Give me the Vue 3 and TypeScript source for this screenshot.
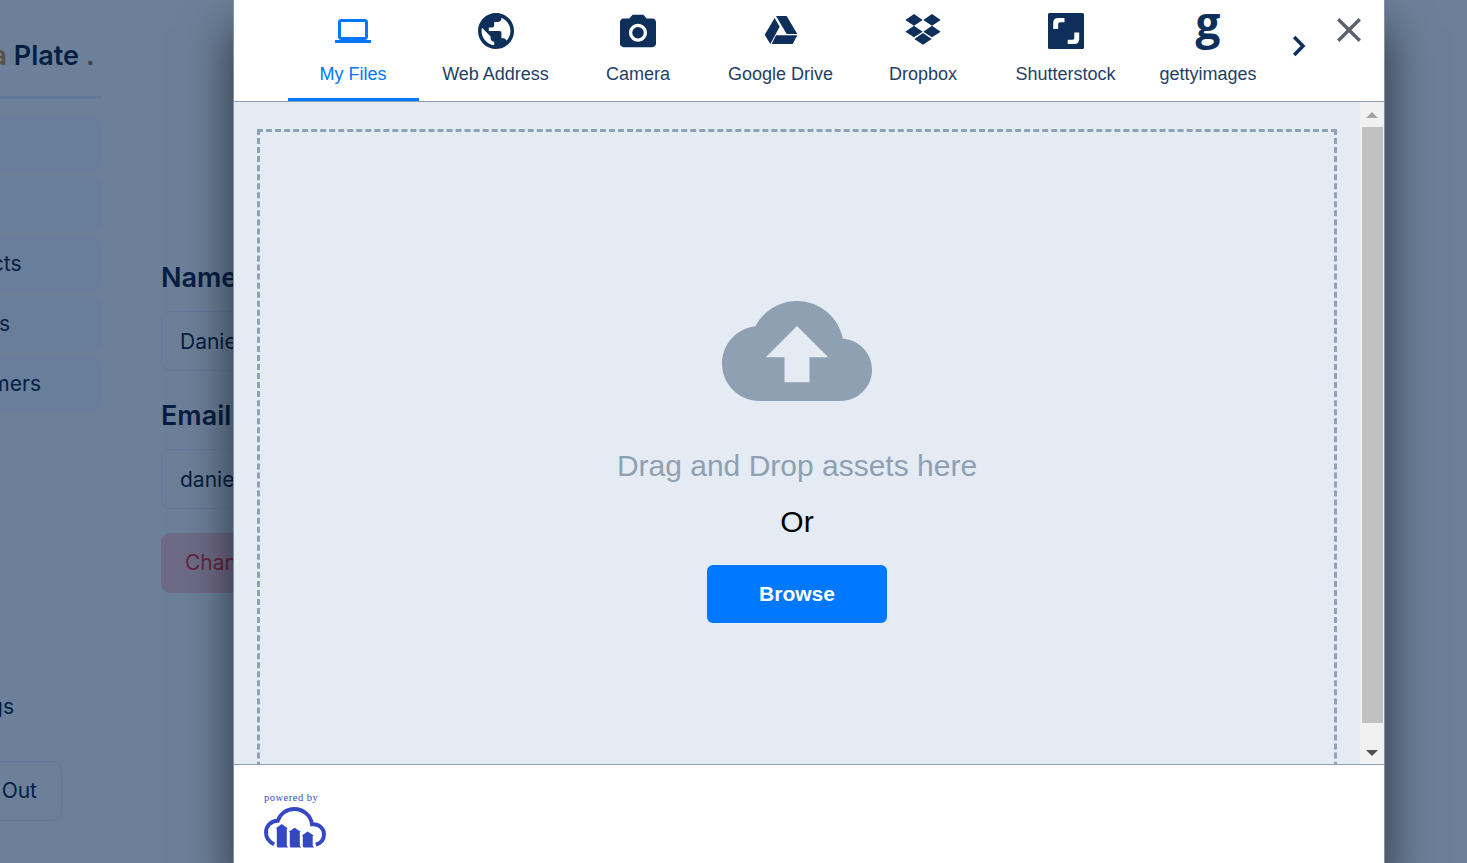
<script setup lang="ts">
interface MenuEntry {
  label: string
  size: string
}

interface Source {
  id: string
  label: string
}

const menu: MenuEntry[] = [
  { label: '', size: 'none' },
  { label: '', size: 'none' },
  { label: 'cts', size: 'medium' },
  { label: 's', size: 'short' },
  { label: 'mers', size: 'long' },
]

const sources: Source[] = [
  { id: 'files', label: 'My Files' },
  { id: 'web', label: 'Web Address' },
  { id: 'camera', label: 'Camera' },
  { id: 'drive', label: 'Google Drive' },
  { id: 'dropbox', label: 'Dropbox' },
  { id: 'shutterstock', label: 'Shutterstock' },
  { id: 'getty', label: 'gettyimages' },
]

const active = 'files'
</script>

<template>
  <div class="screen">
    <div class="page">
      <aside class="sidebar">
        <div class="brand"><span class="accent">a</span>&nbsp;Plate&nbsp;<span class="dot">.</span></div>
        <nav class="menu">
          <div v-for="(entry, i) in menu" :key="i" class="entry">
            <span class="entry-label" :class="entry.size">{{ entry.label }}</span>
          </div>
        </nav>
        <div class="settings">gs</div>
        <div class="logout">Out</div>
      </aside>
      <main class="profile">
        <h2>Name</h2>
        <div class="field">Daniel</div>
        <h2>Email</h2>
        <div class="field">daniel</div>
        <div class="change">Change</div>
      </main>
    </div>

    <section class="modal">
      <header class="top">
        <div class="tabs">
          <div v-for="s in sources" :key="s.id" class="tab" :class="{ active: s.id === active }">
            <svg v-if="s.id === 'files'" class="icon" viewBox="0 0 24 24">
              <path d="M20 18c1.1 0 2-.9 2-2V6c0-1.1-.9-2-2-2H4c-1.1 0-2 .9-2 2v10c0 1.1.9 2 2 2H0v2h24v-2h-4zM4 6h16v10H4V6z" />
            </svg>
            <svg v-else-if="s.id === 'web'" class="icon" viewBox="2 2 20 20">
              <path d="M12 2C6.48 2 2 6.48 2 12s4.48 10 10 10 10-4.48 10-10S17.52 2 12 2zm-1 17.93c-3.95-.49-7-3.85-7-7.93 0-.62.08-1.21.21-1.79L9 15v1c0 1.1.9 2 2 2v1.93zm6.9-2.54c-.26-.81-1-1.39-1.9-1.39h-1v-3c0-.55-.45-1-1-1H8v-2h2c.55 0 1-.45 1-1V7h2c1.1 0 2-.9 2-2v-.41c2.93 1.19 5 4.06 5 7.41 0 2.08-.8 3.97-2.1 5.39z" />
            </svg>
            <svg v-else-if="s.id === 'camera'" class="icon" viewBox="2 1 20 20">
              <circle cx="12" cy="12" r="3.2" />
              <path d="M9 2 7.17 4H4c-1.1 0-2 .9-2 2v12c0 1.1.9 2 2 2h16c1.1 0 2-.9 2-2V6c0-1.1-.9-2-2-2h-3.170L15 2H9zm3 15c-2.760 0-5-2.240-5-5s2.240-5 5-5 5 2.240 5 5-2.240 5-5 5z" />
            </svg>
            <svg v-else-if="s.id === 'drive'" class="icon" viewBox="578 39 108 108">
              <path d="M613 54 628 80 600 132 583 104ZM617 48H649L681 102H649ZM617 106H681L667 132H604Z" />
            </svg>
            <svg v-else-if="s.id === 'dropbox'" class="icon" viewBox="134 39 108 108">
              <path d="M161 42 187 60 161 77 135 60ZM215 42 241 60 215 77 189 60ZM161 77 187 95 161 112 135 95ZM215 77 241 95 215 112 189 95ZM188 99 214 117 188 134 162 117Z" />
            </svg>
            <svg v-else-if="s.id === 'shutterstock'" class="icon" viewBox="0 0 36 36">
              <path fill-rule="evenodd" d="M1.500 0H34.500Q36 0 36 1.500V34.500Q36 36 34.500 36H1.500Q0 36 0 34.500V1.500Q0 0 1.500 0ZM5.200 16V10Q5.200 5 10 5H16.500V9.300H12Q10.200 9.300 10.200 11V16ZM31.200 19.600V26Q31.200 31 26.500 31H19.700V26.700H24.500Q26.300 26.700 26.300 25V19.600Z" />
            </svg>
            <svg v-else class="icon" viewBox="0 0 36 36">
              <text class="letter-mark" x="18" y="26" text-anchor="middle">g</text>
            </svg>
            <span class="tab-label">{{ s.label }}</span>
          </div>
        </div>
        <svg class="next" viewBox="0 0 14 22"><path d="M2.200 2 11 11 2.200 20" /></svg>
        <svg class="close" viewBox="0 0 24 24"><path d="M1.200 1.200 22.800 22.800M22.800 1.200 1.200 22.800" /></svg>
      </header>

      <div class="body">
        <div class="drop">
          <svg class="cloud" viewBox="0 4 24 16">
            <path d="M19.350 10.040C18.670 6.590 15.640 4 12 4 9.110 4 6.600 5.640 5.350 8.040 2.340 8.360 0 10.910 0 14c0 3.310 2.690 6 6 6h13c2.760 0 5-2.240 5-5 0-2.640-2.050-4.780-4.650-4.960zM14 13v4h-4v-4H7l5-5 5 5h-3z" />
          </svg>
          <div class="hint">Drag and Drop assets here</div>
          <div class="or">Or</div>
          <button class="browse" type="button">Browse</button>
        </div>
        <div class="scroll">
          <svg class="arrow dim" viewBox="0 0 12 6"><path d="M0 6 6 0 12 6Z" /></svg>
          <div class="thumb"></div>
          <svg class="arrow" viewBox="0 0 12 6"><path d="M0 0H12L6 6Z" /></svg>
        </div>
      </div>

      <footer class="bottom">
        <div class="powered">powered by</div>
        <svg class="logo" viewBox="0 0 62 41">
          <path class="outline" d="M10.200 37.200C5.500 35 2 30.500 2 25.400 2 18.800 7 13.800 13.800 13.700 16.200 6.800 22.500 2 30.300 2 39.500 2 46.800 8.500 48 17.300 55 16.800 60 21.300 60 27.500 60 32.300 57 36 51.800 37.600" />
          <path d="M11.500 21.500 17.700 17 24 21.500H22.800V38.500L24 40.500H13.500L12.800 39V21.500ZM24.500 25 30.700 20.700 37 25H35.800V38.500L37 40.500H26.500L25.800 39V25ZM37.500 28.800 43.700 24.500 50 28.800H48.700V38.500L50 40.500H39.500L38.800 39V28.800Z" />
        </svg>
      </footer>
    </section>
  </div>
</template>

<style>
html,
body {
  margin: 0;
  overflow: hidden;
}
</style>

<style scoped>
.screen {
  position: relative;
  width: 1467px;
  height: 863px;
  overflow: hidden;
  background: #6c8099;
  font-family: "Liberation Sans", Arial, sans-serif;
}
.screen * {
  box-sizing: border-box;
}
.page {
  display: flex;
  gap: 60px;
  height: 863px;
  font-family: Inter, sans-serif;
  color: #061e42;
}
.sidebar {
  width: 101px;
  flex: none;
  display: flex;
  flex-direction: column;
}
.brand {
  height: 99px;
  padding: 36px 6.5px 0 0;
  border-bottom: 3px solid #62799a;
  display: flex;
  justify-content: flex-end;
  font-size: 27px;
  line-height: 40px;
  font-weight: 600;
  white-space: nowrap;
}
.accent {
  color: #5b523f;
}
.dot {
  color: #414552;
}
.menu {
  margin-top: 18px;
  display: flex;
  flex-direction: column;
  gap: 6px;
}
.entry {
  height: 54px;
  padding-bottom: 2px;
  border-radius: 0 8px 8px 0;
  background: #687e9a;
  display: flex;
  align-items: center;
}
.entry-label,
.settings {
  display: flex;
  justify-content: flex-end;
  font-size: 21px;
}
.none {
  width: 0;
}
.short {
  width: 10px;
}
.medium {
  width: 21.5px;
}
.long {
  width: 41px;
}
.settings {
  width: 14px;
  margin-top: 269px;
  height: 54px;
  padding-bottom: 2px;
  align-items: center;
}
.logout {
  width: 62px;
  height: 60px;
  margin-top: 27px;
  border: 1px solid #647a9a;
  border-left: 0;
  border-radius: 0 9px 9px 0;
  padding: 0 24px 2px 0;
  display: flex;
  align-items: center;
  justify-content: flex-end;
  font-size: 21px;
}
.profile {
  width: 300px;
  padding-top: 260px;
}
.profile h2 {
  margin: 0 0 15px;
  font-size: 27px;
  line-height: 36px;
  font-weight: 600;
}
.field {
  height: 60px;
  margin-bottom: 27px;
  padding-left: 18px;
  border: 1px solid #647a9a;
  border-radius: 9px;
  line-height: 59px;
  font-size: 21px;
}
.change {
  height: 60px;
  margin-top: -3px;
  padding-left: 24px;
  border-radius: 9px;
  background: #6e6b87;
  color: #632641;
  line-height: 59px;
  font-size: 21px;
}
.modal {
  position: absolute;
  left: 233px;
  top: 0;
  width: 1152px;
  height: 863px;
  border: solid #8193ab;
  border-width: 0 1px;
  background: #fff;
  display: flex;
  flex-direction: column;
  box-shadow: 0 28px 46px rgba(0, 0, 0, 0.62);
}
.top {
  height: 102px;
  flex: none;
  border-bottom: 1px solid #8e9fb4;
  display: flex;
  align-items: flex-start;
}
.tabs {
  display: flex;
  gap: 11.5px;
  margin-left: 53.5px;
}
.tab {
  width: 131px;
  height: 101px;
  padding-top: 13px;
  border-bottom: 3px solid transparent;
  display: flex;
  flex-direction: column;
  align-items: center;
  color: #0e2f5a;
}
.tab.active {
  color: #0078ff;
  border-bottom-color: #0078ff;
}
.icon {
  width: 36px;
  height: 36px;
  display: block;
  fill: currentColor;
  overflow: visible;
}
.letter-mark {
  font: 700 44px "Open Sans", sans-serif;
}
.tab-label {
  margin-top: 14px;
  font-size: 18px;
  line-height: 22px;
  white-space: nowrap;
  opacity: 0.92;
}
.active .tab-label {
  opacity: 1;
}
.next {
  width: 14px;
  height: 22px;
  margin: 35px 0 0 18px;
  fill: none;
  stroke: #0e2f5a;
  stroke-width: 3.5;
}
.close {
  width: 24px;
  height: 24px;
  margin: 18px 0 0 31px;
  fill: none;
  stroke: #5c626d;
  stroke-width: 3.4;
}
.body {
  height: 662px;
  flex: none;
  overflow: hidden;
  display: flex;
  align-items: flex-start;
  background: #e4ebf2;
}
.drop {
  width: 1080px;
  height: 720px;
  margin: 27px 0 0 23px;
  padding-top: 169px;
  border: 3px dashed #8fa1b4;
  display: flex;
  flex-direction: column;
  align-items: center;
}
.cloud {
  width: 150px;
  height: 100px;
  fill: #90a0b3;
}
.hint {
  margin-top: 47px;
  font-size: 30px;
  line-height: 36px;
  color: #90a0b3;
}
.or {
  margin-top: 20px;
  font-size: 30px;
  line-height: 36px;
  color: #000;
}
.browse {
  width: 180px;
  height: 58px;
  margin-top: 25px;
  padding: 0;
  border: 0;
  border-radius: 6px;
  background: #0078ff;
  color: #fff;
  font: 700 21px "Liberation Sans", Arial, sans-serif;
}
.scroll {
  width: 25px;
  height: 662px;
  margin: 0 -1px 0 23px;
  flex: none;
  background: #f1f1f1;
  display: flex;
  flex-direction: column;
  align-items: center;
}
.arrow {
  width: 12px;
  height: 6px;
  margin: 27px 1px 0 0;
  flex: none;
  fill: #505050;
}
.arrow.dim {
  margin: 10px 1px 9px 0;
  fill: #a3a3a3;
}
.thumb {
  width: 21px;
  height: 596px;
  flex: none;
  background: #c1c1c1;
}
.bottom {
  flex: 1;
  border-top: 1px solid #8e9fb4;
  padding: 26px 0 0 30px;
}
.powered {
  font: 10.5px/14px "Liberation Serif", "Times New Roman", serif;
  letter-spacing: 0.5px;
  color: #3448c5;
}
.logo {
  display: block;
  width: 62px;
  height: 41px;
  margin-top: 2px;
  fill: #3448c5;
}
.outline {
  fill: none;
  stroke: #3448c5;
  stroke-width: 3.9;
}
</style>
